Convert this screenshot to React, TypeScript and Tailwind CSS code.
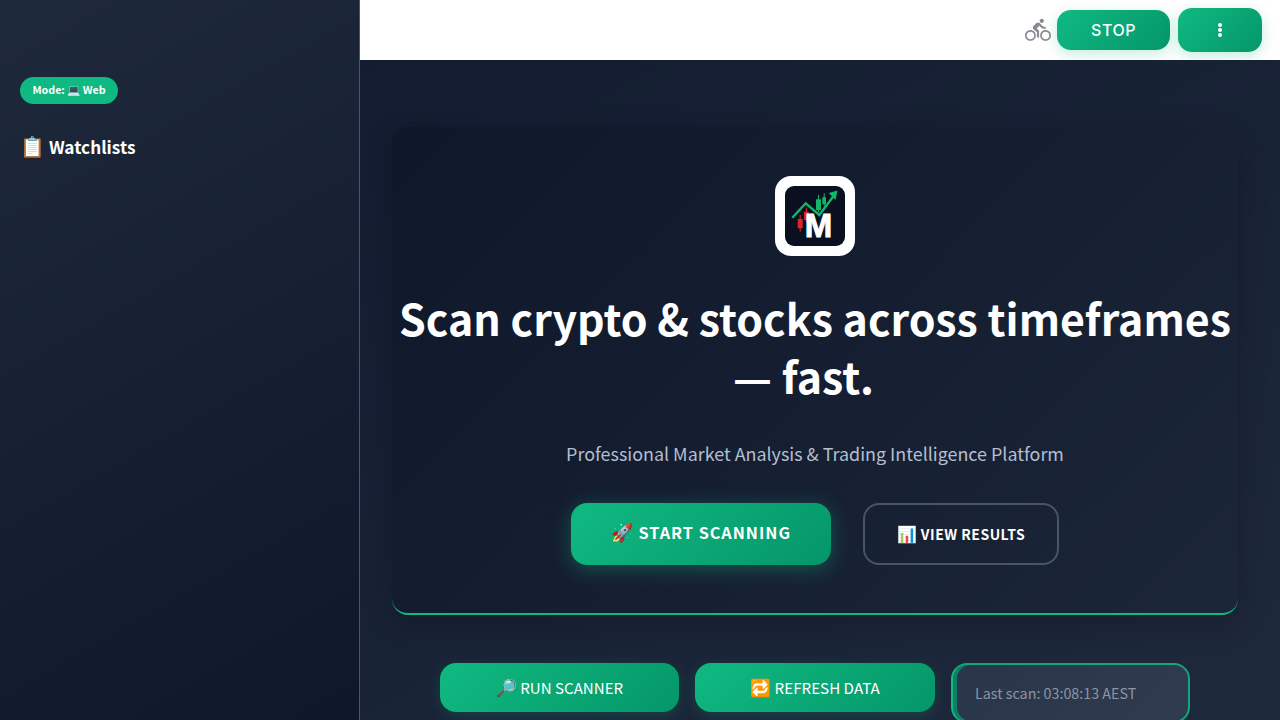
import React from 'react';
import { MdDirectionsBike } from 'react-icons/md';

const sourceFont = "font-['Noto_Sans_CJK_SC','Noto_Sans',sans-serif]";
const greenButton = 'bg-[linear-gradient(135deg,#10b981_0%,#059669_100%)] text-white';

const Logo: React.FC = () => (
  <div className="flex h-20 w-20 items-center justify-center rounded-[16px] bg-white">
    <svg viewBox="0 0 60 60" className="h-[60px] w-[60px]">
      <rect width="60" height="60" rx="9" fill="#0b1020" />
      <path d="M7.3 31.7 L20.7 17.3 L34.3 29 L49 9.5" fill="none" stroke="#12b76a" strokeWidth="2.4" />
      <path d="M52.5 4.5 L50.5 14 L43.8 7 Z" fill="#12b76a" />
      <rect x="12.7" y="33" width="5" height="9.3" fill="#dc2626" />
      <rect x="14.7" y="29" width="1" height="16.7" fill="#dc2626" />
      <rect x="19" y="25.7" width="4.7" height="8.3" fill="#dc2626" />
      <rect x="20.9" y="21.7" width="1" height="14.6" fill="#dc2626" />
      <rect x="25" y="30" width="5" height="2.3" fill="#12b76a" />
      <rect x="27" y="27.7" width="1" height="8" fill="#12b76a" />
      <rect x="31" y="13.3" width="5" height="10.7" fill="#12b76a" />
      <rect x="33" y="9" width="1" height="17.3" fill="#12b76a" />
      <rect x="37.3" y="11.3" width="3.7" height="7" fill="#12b76a" />
      <rect x="38.7" y="7.3" width="1" height="13.4" fill="#12b76a" />
      <text x="33.5" y="50.7" textAnchor="middle" fontFamily="Liberation Sans, sans-serif" fontWeight="700" fontSize="33" fill="#ffffff" stroke="#ffffff" strokeWidth="0.9">M</text>
    </svg>
  </div>
);

const App: React.FC = () => {
  return (
    <div className={`flex h-screen w-[1280px] overflow-hidden ${sourceFont}`}>
      <aside className="h-full w-[360px] shrink-0 border-r border-[#4b5563] bg-[linear-gradient(150deg,#1e293b_0%,#0f172a_100%)] px-5 pt-[77px]">
        <div className="flex h-[27px] w-[98px] items-center justify-center rounded-full bg-[#10b981] text-[10.7px] font-semibold text-white">
          Mode: 💻 Web
        </div>
        <h3 className="mt-[26px] text-[17.2px] leading-[32px] font-semibold text-white">
          <span className="text-[20px]">📋</span> Watchlists
        </h3>
      </aside>

      <div className="flex h-full min-w-0 flex-1 flex-col">
        <header className="flex h-[60px] shrink-0 items-center justify-end bg-white pr-[18px]">
          <MdDirectionsBike className="mr-1.5 h-[26px] w-[26px] text-[#8a8a94]" />
          <button className={`h-10 w-[113px] rounded-[14px] font-['Inter',sans-serif] text-[16px] font-medium tracking-[0.5px] shadow-[0_4px_14px_rgba(16,185,129,0.25)] ${greenButton}`}>
            STOP
          </button>
          <button className={`ml-2 flex h-11 w-[84px] flex-col items-center justify-center gap-[1px] rounded-[14px] shadow-[0_4px_14px_rgba(16,185,129,0.25)] ${greenButton}`}>
            <span className="h-[4px] w-[4px] rounded-full bg-white" />
            <span className="h-[4px] w-[4px] rounded-full bg-white" />
            <span className="h-[4px] w-[4px] rounded-full bg-white" />
          </button>
        </header>

        <main className="min-h-0 flex-1 overflow-hidden bg-[linear-gradient(150deg,#131c30_0%,#1e293b_100%)] pt-[67px] pr-[42px] pl-8">
          <section className="flex h-[488px] flex-col items-center rounded-2xl border-b-2 border-[#10b981] bg-[linear-gradient(135deg,#0f172a_0%,#1c2639_100%)] pt-[49px] shadow-[0_10px_30px_rgba(0,0,0,0.2)]">
            <Logo />
            <h1 className="mt-[32px] text-center text-[42.9px] leading-[58px] font-bold text-white">
              Scan crypto &amp; stocks across timeframes — fast.
              <span className="inline-block w-[23px]" />
            </h1>
            <p className="mt-[33px] text-[17.9px] leading-[32px] text-[#b4bfd0]">
              Professional Market Analysis &amp; Trading Intelligence Platform
            </p>
            <div className="mt-[34px] flex gap-8">
              <button className={`h-[62px] w-[260px] rounded-2xl pb-[5px] text-[16.2px] font-bold tracking-[1px] shadow-[0_4px_20px_rgba(16,185,129,0.35)] ${greenButton}`}>
                <span className="text-[18px]">🚀</span> START SCANNING
              </button>
              <button className="h-[62px] w-[196px] rounded-2xl border-2 border-[#475569] pb-[2px] text-[14px] font-semibold tracking-[0.5px] text-white">
                <span className="text-[16px]">📊</span> VIEW RESULTS
              </button>
            </div>
          </section>

          <div className="mt-[48px] flex justify-center gap-4">
            <button className={`h-[49px] w-[239px] rounded-2xl pb-[2px] text-[15.1px] shadow-[0_4px_14px_rgba(16,185,129,0.2)] ${greenButton}`}>
              <span className="text-[17px]">🔎</span> RUN SCANNER
            </button>
            <button className={`h-[49px] w-[240px] rounded-2xl pb-[2px] text-[15.2px] shadow-[0_4px_14px_rgba(16,185,129,0.2)] ${greenButton}`}>
              <span className="text-[17px]">🔁</span> REFRESH DATA
            </button>
            <div className="h-[60px] w-[239px] rounded-2xl border-2 border-[#10a877] border-l-[#12b981] bg-[linear-gradient(135deg,#29364a_0%,#2f3c50_100%)] pt-[13px] pl-[22px] text-[14.3px] leading-[30px] text-[#8d95a3] shadow-[inset_4px_0_0_#0e7f63]">
              Last scan: 03:08:13 AEST
            </div>
          </div>
        </main>
      </div>
    </div>
  );
};

export default App;
